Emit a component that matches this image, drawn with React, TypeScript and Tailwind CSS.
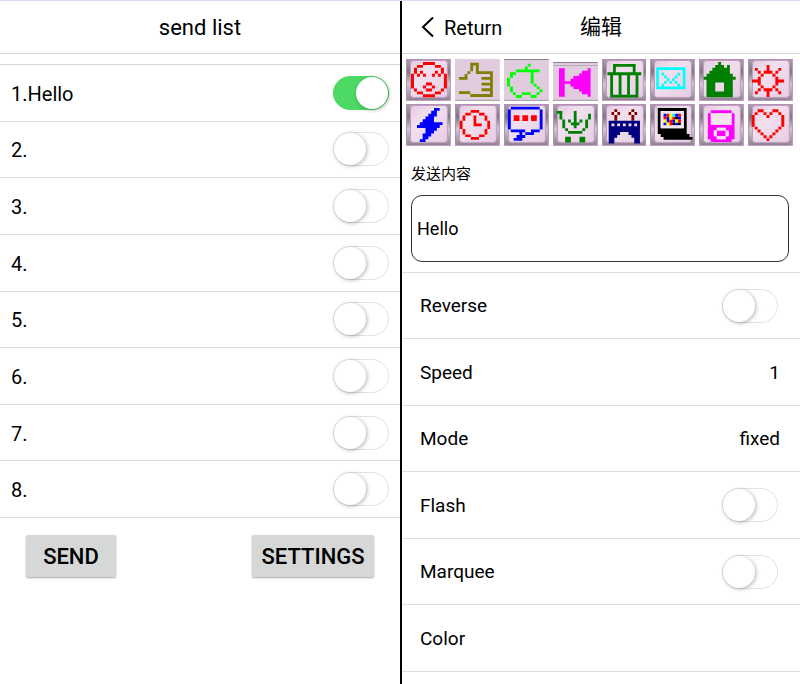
import { useState } from "react";

const INK: Record<string, string> = {
  r: "#ff0000",
  o: "#808000",
  l: "#00ff00",
  m: "#ff00ff",
  g: "#008000",
  c: "#00ffff",
  b: "#0000ff",
  n: "#000080",
  d: "#800000",
  k: "#000000",
  w: "#f3e4f0",
  y: "#ffff00",
};

type Glyph = {
  name: string;
  x: number;
  y: number;
  cw: number;
  ch: number;
  flat?: boolean;
  rows: string[];
};

const glyphs: Glyph[] = [
  {
    name: "Face", x: 5, y: 3, cw: 3, ch: 2.95,
    rows: [
      "....rrrr....",
      "..rr....rr..",
      ".r........r.",
      ".r.r....r.r.",
      "r.r.r..r.r.r",
      "r..........r",
      "r..........r",
      "r....rr....r",
      "r...r..r...r",
      ".r...rr...r.",
      "..rr....rr..",
      "....rrrr....",
    ],
  },
  {
    name: "Thumb", x: 4, y: 3.7, cw: 2.83, ch: 2.86, flat: true,
    rows: [
      "....ooo.....",
      "....o.o.....",
      "....o.o.....",
      "...o..oooooo",
      "..o........o",
      "ooo.....oooo",
      "...........o",
      "........oooo",
      "...........o",
      "........oooo",
      "oooo.......o",
      "....oooooooo",
    ],
  },
  {
    name: "Apple", x: 3, y: 4.7, cw: 2.97, ch: 2.86, flat: true,
    rows: [
      ".......l....",
      "......l.....",
      "...llllllll.",
      ".ll.....l...",
      ".l......l...",
      "l.......l...",
      "l.......l...",
      "l........l..",
      ".l........l.",
      ".l.........l",
      "..l..lll..l.",
      "...ll...ll..",
    ],
  },
  {
    name: "Previous", x: 6, y: 9.3, cw: 2.88, ch: 2.6, flat: true,
    rows: [
      "mm........m",
      "mm......mmm",
      "mm.....mmmm",
      "mm...mmmmmm",
      "mm..mmmmmmm",
      "mmmmmmmmmmm",
      "mm..mmmmmmm",
      "mm...mmmmmm",
      "mm.....mmmm",
      "mm......mmm",
      "mm........m",
    ],
  },
  {
    name: "Trash", x: 5.4, y: 5, cw: 2.83, ch: 2.8,
    rows: [
      "..gggggggg..",
      "..g......g..",
      "..g......g..",
      "gggggggggggg",
      ".g..g..g..g.",
      ".g..g..g..g.",
      ".g..g..g..g.",
      ".g..g..g..g.",
      ".g..g..g..g.",
      ".g..g..g..g.",
      ".g..g..g..g.",
      ".gggggggggg.",
    ],
  },
  {
    name: "Mail", x: 6.2, y: 8.3, cw: 2.67, ch: 2.75,
    rows: [
      "ccccccccccc",
      "c.........c",
      "c.c.....c.c",
      "c..c...c..c",
      "c...c.c...c",
      "c..c.c.c..c",
      "c.c.....c.c",
      "ccccccccccc",
    ],
  },
  {
    name: "Home", x: 4.6, y: 3, cw: 2.93, ch: 2.95,
    rows: [
      ".....g.....",
      "....ggg.g..",
      "...gggggg..",
      "..ggggggg..",
      ".ggggggggg.",
      "ggggggggggg",
      ".ggggggggg.",
      ".ggg...ggg.",
      ".ggg...ggg.",
      ".ggg...ggg.",
      ".ggggggggg.",
      ".ggggggggg.",
    ],
  },
  {
    name: "Sun", x: 4, y: 6, cw: 2.93, ch: 2.93,
    rows: [
      ".....r.....",
      ".r...r...r.",
      "..r.rrr.r..",
      "...r...r...",
      "..r.....r..",
      "rrr.....rrr",
      "..r.....r..",
      "...r...r...",
      "..r.rrr.r..",
      ".r...r...r.",
      ".....r.....",
    ],
  },
  {
    name: "Lightning", x: 11, y: 4, cw: 2.85, ch: 2.85,
    rows: [
      "......bb.",
      ".....bb..",
      "....bbb..",
      "...bbb...",
      "..bbbb...",
      ".bbbbbbbb",
      "bbbbbbbb.",
      "...bbbb..",
      "...bbb...",
      "..bbb....",
      "..bb.....",
      ".bb......",
    ],
  },
  {
    name: "Clock", x: 4.8, y: 6, cw: 2.76, ch: 2.72,
    rows: [
      "....rrr....",
      "..rr...rr..",
      ".r...r...r.",
      ".r...r...r.",
      "r....r....r",
      "r....rrr..r",
      "r.........r",
      ".r.......r.",
      ".r.......r.",
      "..rr...rr..",
      "....rrr....",
    ],
  },
  {
    name: "Chat", x: 3.9, y: 2.7, cw: 2.9, ch: 2.85,
    rows: [
      ".bbbbbbbbbb.",
      "b..........b",
      "b..........b",
      "b.rr.rr.rr.b",
      "b.rr.rr.rr.b",
      "b..........b",
      "b..........b",
      "b..........b",
      ".bbbbb..bbb.",
      "....b.bbb...",
      "...bbb......",
      "..bbb.......",
    ],
  },
  {
    name: "Cart", x: 3.6, y: 7, cw: 2.87, ch: 2.87,
    rows: [
      "gg....g.....",
      ".g....g....g",
      ".g....g....g",
      "..g.g.g.g.g.",
      "..g..ggg..g.",
      "..g...g...g.",
      "...g.....g..",
      "....ggggg...",
      "............",
      "...gg...gg..",
      "...gg...gg..",
    ],
  },
  {
    name: "Bridge", x: 6.7, y: 5.2, cw: 2.85, ch: 2.87,
    rows: [
      "..d.....d..",
      ".dwd...dwd.",
      "..d.....d..",
      "..d.....d..",
      "nnnnnnnnnnn",
      "nwnwnwnwnwn",
      "nnnnnnnnnnn",
      "nnnnnnnnnnn",
      "nnnn...nnnn",
      "nnn.....nnn",
      "nn.......nn",
      "nn.......nn",
    ],
  },
  {
    name: "Computer", x: 7.8, y: 4, cw: 2.9, ch: 2.9,
    rows: [
      "kkkkkkkkkk..",
      "kwwwwwwwwk..",
      "kwbrycbrwk..",
      "kwrbyrkbwk..",
      "kwybrbyrwk..",
      "kwbyrkbkwk..",
      "kwwwwwwwwk..",
      "kkkkkkkkkk..",
      "kkkkkkkkkk..",
      ".kkkkkkkkkk.",
      "..kkkkkkkkkk",
    ],
  },
  {
    name: "Player", x: 8.9, y: 6.3, cw: 2.97, ch: 2.9,
    rows: [
      ".mmmmmmm.",
      "mwwwwwwwm",
      "mwwwwwwwm",
      "mwwwwwwwm",
      "mwwwwwwwm",
      "mmmmmmmmm",
      "mmmwwwmmm",
      "mmwmmmwmm",
      "mmwmmmwmm",
      "mmmwwwmmm",
      ".mmmmmmm.",
    ],
  },
  {
    name: "Heart", x: 3.7, y: 5.3, cw: 2.97, ch: 2.9,
    rows: [
      "..rr...rr..",
      ".r..r.r..r.",
      "r....r....r",
      "r.........r",
      "r.........r",
      "r.........r",
      ".r.......r.",
      "..r.....r..",
      "...r...r...",
      "....r.r....",
      ".....r.....",
    ],
  },
];

// One path per ink colour, so that neighbouring cells join without seams.
function inkPaths(glyph: Glyph): [string, string][] {
  const paths: Record<string, string> = {};
  glyph.rows.forEach((row, r) =>
    [...row].forEach((cell, c) => {
      if (cell === ".") return;
      const left = (glyph.x + c * glyph.cw).toFixed(2);
      const right = (glyph.x + (c + 1) * glyph.cw).toFixed(2);
      const top = (glyph.y + r * glyph.ch).toFixed(2);
      const bottom = (glyph.y + (r + 1) * glyph.ch).toFixed(2);
      paths[cell] = `${paths[cell] ?? ""}M${left} ${top}H${right}V${bottom}H${left}Z`;
    }),
  );
  return Object.entries(paths);
}

function GlyphTile({ glyph }: { glyph: Glyph }) {
  const low = glyph.name === "Previous";
  return (
    <button type="button" aria-label={glyph.name} className="block">
      <svg viewBox="0 0 45 42" className="block w-full">
        <defs>
          <linearGradient id="tileFace" x1="0" y1="0" x2="1" y2="1">
            <stop offset="0" stopColor="#e3cbe0" />
            <stop offset="0.35" stopColor="#f1e0ee" />
            <stop offset="1" stopColor="#e6cde4" />
          </linearGradient>
          <linearGradient id="tileEdge" x1="0" y1="0" x2="0" y2="1">
            <stop offset="0" stopColor="#a89fab" />
            <stop offset="0.3" stopColor="#7d767f" />
            <stop offset="0.6" stopColor="#d2c9d3" />
            <stop offset="1" stopColor="#8f8592" />
          </linearGradient>
        </defs>
        {glyph.flat ? (
          <>
            <rect width="45" height="42" fill={low ? "#ffffff" : "#e0cbdf"} />
            {low && <rect width="45" height="39" y="3" fill="#e0cbdf" />}
            <rect width="45" height="1" y={low ? 3 : 0} fill={glyph.name === "Thumb" ? "#e0cbdf" : "#8d858d"} />
            {low && <rect width="45" height="1" y="6" fill="#b5acb5" />}
            <rect width="45" height="1" y="41" fill="#a79ea8" />
          </>
        ) : (
          <>
            <rect width="45" height="42" fill="#b58fb5" />
            <rect x="1" y="1" width="43" height="40" rx="3" fill="url(#tileEdge)" />
            <rect x="4.5" y="1.5" width="37" height="37" rx="3" fill="url(#tileFace)" stroke="#c49cc4" />
          </>
        )}
        {inkPaths(glyph).map(([ink, d]) => (
          <path key={ink} d={d} fill={INK[ink]} />
        ))}
      </svg>
    </button>
  );
}

function Toggle({ id, initial = false }: { id: string; initial?: boolean }) {
  const [on, setOn] = useState(initial);
  return (
    <input
      id={id}
      type="checkbox"
      checked={on}
      onChange={() => setOn(!on)}
      className="flex h-[34px] w-14 shrink-0 appearance-none items-center rounded-full border border-[#e2e2e2] bg-white before:block before:size-8 before:rounded-full before:bg-white before:shadow-[1px_1px_4px_rgba(0,0,0,0.3)] checked:justify-end checked:border-[#4cd964] checked:bg-[#4cd964]"
    />
  );
}

const messages = ["Hello", "", "", "", "", "", "", ""];

function SendList() {
  return (
    <section className="w-1/2">
      <header className="flex h-[53px] items-center justify-center border-b border-[#d4d4d4]">
        <h1 className="text-[22px]">send list</h1>
      </header>
      <ul className="mt-[10px] flex h-[454px] flex-col border-t border-[#d8d8d8]">
        {messages.map((text, i) => (
          <li key={i} className="flex flex-1 items-center justify-between border-b border-[#dedede] px-[11px]">
            <label htmlFor={`message-${i}`} className="pt-[2px] text-[20px]">{`${i + 1}.${text}`}</label>
            <Toggle id={`message-${i}`} initial={i === 0} />
          </li>
        ))}
      </ul>
      <div className="flex justify-between px-[26px] pt-[17px]">
        <button type="button" className="h-[42px] w-[90px] rounded-xs bg-[#d6d7d7] text-[22px] font-medium shadow-[0_1px_2px_rgba(0,0,0,0.35)]">
          SEND
        </button>
        <button type="button" className="h-[42px] w-[122px] rounded-xs bg-[#d6d7d7] text-[22px] font-medium shadow-[0_1px_2px_rgba(0,0,0,0.35)]">
          SETTINGS
        </button>
      </div>
    </section>
  );
}

const rowClass = "flex flex-1 items-center justify-between border-b border-[#dedede] pl-[18px]";
const labelClass = "pt-[2px]";
const selectClass = "appearance-none bg-transparent pt-[2px] text-right [text-align-last:right]";

function Editor() {
  return (
    <section className="w-1/2 border-l-2 border-black">
      <header className="grid h-[53px] grid-cols-[1fr_auto_1fr] items-center border-b border-[#d4d4d4] px-[18px] pt-[2px]">
        <button type="button" className="flex items-center gap-[10px] text-[20px]">
          <svg viewBox="0 0 14 22" className="h-[22px] w-[14px]" fill="none" stroke="#000" strokeWidth="2">
            <path d="M13 0.500 3 10l10 9.500" />
          </svg>
          Return
        </button>
        <h2 className="text-[21px]">编辑</h2>
      </header>
      <div className="grid grid-cols-8 gap-x-1 gap-y-[3px] pt-[5px] pr-[7px] pl-1">
        {glyphs.map((glyph) => (
          <GlyphTile key={glyph.name} glyph={glyph} />
        ))}
      </div>
      <div className="pt-[17px] pr-[11px] pb-[10px] pl-[9px]">
        <label htmlFor="content" className="block text-[15px] leading-[22px]">发送内容</label>
        <input
          id="content"
          defaultValue="Hello"
          className="mt-[10px] block h-[67px] w-full rounded-[11px] border border-[#333] px-[5px] text-[18px]"
        />
      </div>
      <div className="flex h-[400px] flex-col border-t border-[#dedede] text-[19px]">
        <div className={`${rowClass} pr-[22px]`}>
          <label htmlFor="reverse" className={labelClass}>Reverse</label>
          <Toggle id="reverse" />
        </div>
        <div className={`${rowClass} pr-[20px]`}>
          <label htmlFor="speed" className={labelClass}>Speed</label>
          <select id="speed" defaultValue="1" className={selectClass}>
            <option>1</option>
          </select>
        </div>
        <div className={`${rowClass} pr-[20px]`}>
          <label htmlFor="mode" className={labelClass}>Mode</label>
          <select id="mode" defaultValue="fixed" className={selectClass}>
            <option>fixed</option>
          </select>
        </div>
        <div className={`${rowClass} pr-[22px]`}>
          <label htmlFor="flash" className={labelClass}>Flash</label>
          <Toggle id="flash" />
        </div>
        <div className={`${rowClass} pr-[22px]`}>
          <label htmlFor="marquee" className={labelClass}>Marquee</label>
          <Toggle id="marquee" />
        </div>
        <div className={rowClass}>
          <span className={labelClass}>Color</span>
        </div>
      </div>
    </section>
  );
}

export default function App() {
  return (
    <main className="flex min-h-screen border-t border-[#dcdcf0] bg-white font-[Roboto,'Noto_Sans_CJK_SC',sans-serif] text-black">
      <SendList />
      <Editor />
    </main>
  );
}
